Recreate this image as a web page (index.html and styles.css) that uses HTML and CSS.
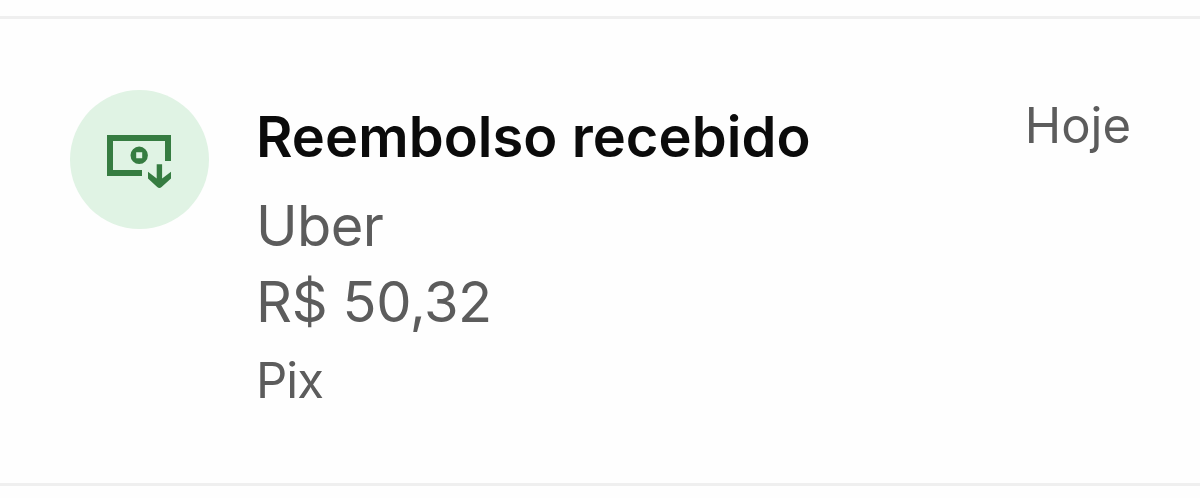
FILE: index.html
```html
<!DOCTYPE html>
<html lang="pt-BR">
<head>
<meta charset="utf-8">
<title>Extrato</title>
<link rel="stylesheet" href="styles.css">
</head>
<body>
<article class="entry">
  <div class="badge">
    <svg class="badge-icon" viewBox="0 0 64 54" aria-hidden="true">
      <path d="M35 38H3V3H61V26" fill="none" stroke="currentColor" stroke-width="6"/>
      <path fill="currentColor" fill-rule="evenodd" d="M32.2 11.6a8.7 8.7 0 1 1 0 17.4a8.7 8.7 0 1 1 0-17.4ZM29.2 17.3v6h6v-6Z"/>
      <path fill="currentColor" d="M49.7 29.3h5.4v14.3l8.9-6.9v6.8L54.6 52q-2.2 2-4.4 0L41 43.5v-6.8l8.7 6.9Z"/>
    </svg>
  </div>
  <div class="details">
    <h1 class="title">Reembolso recebido</h1>
    <p class="name">Uber</p>
    <p class="amount">R$ 50,32</p>
    <p class="method">Pix</p>
  </div>
  <time class="date">Hoje</time>
</article>
</body>
</html>
```
FILE: styles.css
```css
body {
  margin: 0;
  padding-top: 16px;
  background: #fefefe;
  font-family: Inter, "Liberation Sans", sans-serif;
  font-weight: 370;
  color: #5c5c5c;
}
.entry {
  display: flex;
  box-sizing: border-box;
  height: 470px;
  padding: 71px 69px 0 70px;
  border-top: 3px solid #efefef;
  border-bottom: 3px solid #efefef;
}
.badge {
  display: flex;
  flex: none;
  box-sizing: border-box;
  padding: 45px 0 0 37px;
  width: 139px;
  height: 139px;
  border-radius: 50%;
  background: #e0f3e4;
  color: #367c41;
}
.badge-icon {
  width: 64px;
  height: 54px;
}
.details {
  flex: 1;
  margin-left: 47px;
  padding-top: 9px;
}
.title, .name, .amount, .method {
  margin: 0;
  line-height: 76px;
  font-size: 56px;
  font-weight: inherit;
  white-space: nowrap;
}
.title {
  margin-bottom: 13px;
  color: #0b0b0b;
  font-weight: 600;
  letter-spacing: 0.05px;
}
.name {
  letter-spacing: -0.6px;
}
.amount {
  letter-spacing: -0.4px;
}
.method {
  margin-top: 9px;
  line-height: 64px;
  font-size: 49px;
  letter-spacing: -1px;
}
.date {
  padding-top: 4px;
  line-height: 64px;
  font-size: 49px;
}
```
